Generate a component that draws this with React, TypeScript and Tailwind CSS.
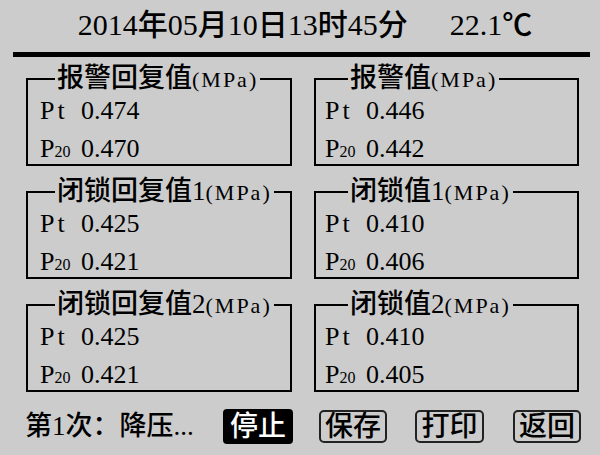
import React from 'react';

interface Panel {
  title: string;
  pt: string;
  p20: string;
}

const PANELS: Panel[] = [
  { title: '报警回复值', pt: '0.474', p20: '0.470' },
  { title: '报警值', pt: '0.446', p20: '0.442' },
  { title: '闭锁回复值1', pt: '0.425', p20: '0.421' },
  { title: '闭锁值1', pt: '0.410', p20: '0.406' },
  { title: '闭锁回复值2', pt: '0.425', p20: '0.421' },
  { title: '闭锁值2', pt: '0.410', p20: '0.405' },
];

const BUTTONS = [
  { label: '保存', w: 'w-[68px]', ml: 'ml-[26px]' },
  { label: '打印', w: 'w-[69px]', ml: 'ml-[28px]' },
  { label: '返回', w: 'w-[68px]', ml: 'ml-[29px]' },
];

function ValueBox({ panel, right }: { panel: Panel; right: boolean }) {
  return (
    <fieldset className="border-2 border-black">
      <legend className={`${right ? 'ml-[32px]' : 'ml-[27px]'} px-[2px] text-[27px] leading-[28px]`}>
        {panel.title}
        <span className="text-[22px] tracking-[2px]">(MPa)</span>
      </legend>
      <div className={`${right ? 'pl-[9px]' : 'pl-[12px]'} text-[26px]`}>
        <div className="flex h-[32px] items-center">
          <span className="inline-block w-[41px] tracking-[3px]">Pt</span>
          <span>{panel.pt}</span>
        </div>
        <div className="mt-[6px] flex h-[32px] items-center">
          <span className="inline-block w-[41px]">
            P<span className="text-[16px]">20</span>
          </span>
          <span>{panel.p20}</span>
        </div>
      </div>
    </fieldset>
  );
}

export default function App() {
  return (
    <div className="min-h-screen w-full bg-[#cccccc] font-medium text-black font-[family-name:'Liberation_Serif','Noto_Sans_CJK_SC',serif]">
      {/* 顶部日期 / 温度 */}
      <header className="ml-[13px] mr-[10px] h-[57px] border-b-[5px] border-black pl-[7px] text-center text-[30px] leading-[50px]">
        2014年05月10日13时45分
        <span className="ml-[42px]">22.1℃</span>
      </header>

      <main className="mt-[7px] grid grid-cols-[266px_265px] gap-x-[22px] gap-y-[11px] pl-[26px]">
        {PANELS.map((p, i) => (
          <ValueBox key={p.title + i} panel={p} right={i % 2 === 1} />
        ))}
      </main>

      {/* 底部状态 + 按钮 */}
      <footer className="mt-[17px] flex h-[35px] items-center pl-[25px]">
        <span className="inline-block w-[198px] text-[27px] leading-none">第1次：降压...</span>
        <button className="flex h-[35px] w-[70px] items-center justify-center rounded-[4px] bg-black text-[28px] leading-none text-white">
          停止
        </button>
        {BUTTONS.map(b => (
          <button
            key={b.label}
            className={`${b.w} ${b.ml} flex h-[33px] items-center justify-center rounded-[5px] border-2 border-[#222] text-[28px] leading-none`}
          >
            {b.label}
          </button>
        ))}
      </footer>
    </div>
  );
}
